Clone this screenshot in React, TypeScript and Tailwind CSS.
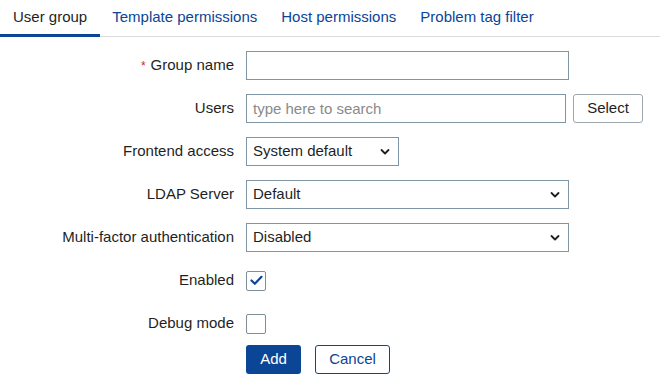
const tabs = ["User group", "Template permissions", "Host permissions", "Problem tag filter"];

const Chevron = () => (
  <svg
    className="pointer-events-none absolute right-[9px] top-1/2 -translate-y-1/2"
    width="10"
    height="7"
    viewBox="0 0 10 7"
    fill="none">
    <path d="M1.5 1.5 L5 5 L8.5 1.5" stroke="#1f1f1f" strokeWidth="1.8" strokeLinecap="round" strokeLinejoin="round" />
  </svg>
);

const Select = ({ value, width }: { value: string; width: string }) => (
  <div className={`relative h-[29px] ${width}`}>
    <select
      defaultValue={value}
      className="h-full w-full appearance-none rounded-none border border-[#8196a5] bg-white pl-[6px] pr-6 text-[15px] text-[#1f1f1f] outline-none">
      <option>{value}</option>
    </select>
    <Chevron />
  </div>
);

const Label = ({ children, required }: { children: string; required?: boolean }) => (
  <div className="flex h-[29px] items-center justify-end text-[15px] text-[#1f1f1f]">
    {required && <span className="mr-[5px] text-[12px] leading-none text-[#e11b1b]">*</span>}
    {children}
  </div>
);

const Checkbox = ({ checked }: { checked?: boolean }) => (
  <div className="flex h-[29px] items-center">
    <div className="flex h-[20px] w-[20px] items-center justify-center rounded-[2px] border border-[#7d8f9b] bg-white">
      {checked && (
        <svg width="13" height="11" viewBox="0 0 13 11" fill="none">
          <path d="M1.5 5.5 L4.8 8.8 L11.5 1.8" stroke="#0b4596" strokeWidth="2.2" strokeLinecap="round" strokeLinejoin="round" />
        </svg>
      )}
    </div>
  </div>
);

export default function App() {
  return (
    <div className="h-[392px] w-[660px] bg-white font-['Liberation_Sans',Arial,sans-serif]">
      <div className="flex h-[37px] border-b border-[#d9dde0]">
        {tabs.map((t, i) => (
          <div
            key={t}
            className={`flex items-center pb-[1px] text-[15px] ${
              i === 0
                ? "-mb-px border-b-[3px] border-[#0b4596] px-[13px] pt-[2px] text-[#1f1f1f]"
                : "px-[12px] text-[#0b4596]"
            }`}>
            {t}
          </div>
        ))}
      </div>

      <div className="mt-[14px] grid grid-cols-[234px_auto] gap-x-3 gap-y-[14px]">
        <Label required>Group name</Label>
        <input className="h-[29px] w-[323px] border border-[#8196a5] px-[6px] text-[15px] outline-none" />

        <Label>Users</Label>
        <div className="flex gap-[7px]">
          <input
            placeholder="type here to search"
            className="h-[29px] w-[320px] border border-[#8196a5] px-[6px] text-[15px] outline-none placeholder:text-[#8a8a8a]"
          />
          <button className="h-[29px] w-[70px] rounded-[3px] border border-[#9ca7ae] bg-white text-[15px] text-[#1f1f1f]">
            Select
          </button>
        </div>

        <Label>Frontend access</Label>
        <Select value="System default" width="w-[153px]" />

        <Label>LDAP Server</Label>
        <Select value="Default" width="w-[323px]" />

        <Label>Multi-factor authentication</Label>
        <Select value="Disabled" width="w-[323px]" />

        <Label>Enabled</Label>
        <Checkbox checked />

        <Label>Debug mode</Label>
        <Checkbox />

        <div />
        <div className="-mt-[7px] flex gap-[14px]">
          <button className="h-[29px] w-[55px] rounded-[3px] bg-[#0b4596] text-[15px] text-white">Add</button>
          <button className="h-[29px] w-[75px] rounded-[3px] border border-[#0b4596] bg-white text-[15px] text-[#0b4596]">
            Cancel
          </button>
        </div>
      </div>
    </div>
  );
}
